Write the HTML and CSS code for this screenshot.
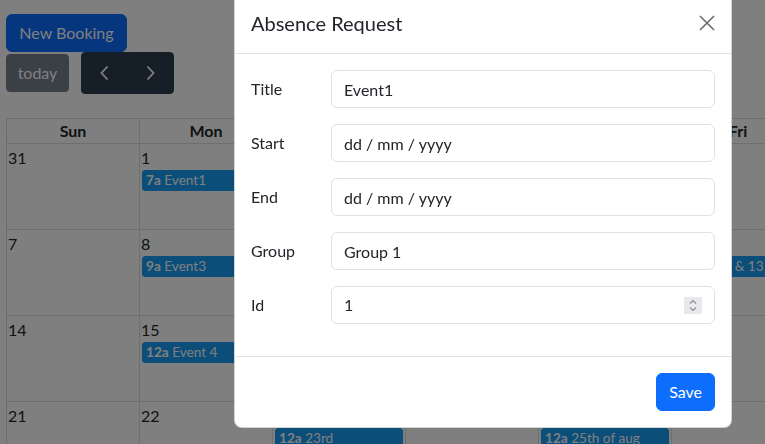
FILE: index.html
```html
<!DOCTYPE html>
<html lang="en">
<head>
<meta charset="utf-8">
<title>Bookings</title>
<link rel="stylesheet" href="styles.css">
</head>
<body>
<div class="page">
  <button class="btn btn-primary new-booking">New Booking</button>
  <div class="calendar">
    <div class="toolbar">
      <button class="fc-btn fc-today" disabled>today</button>
      <div class="fc-group">
        <button class="fc-btn fc-nav fc-prev" aria-label="prev">
          <svg width="10" height="16" viewBox="0 0 10 16"><path d="M8.5 1.5 2.5 8l6 6.5" fill="none" stroke="#fff" stroke-width="1.8"/></svg>
        </button>
        <button class="fc-btn fc-nav fc-next" aria-label="next">
          <svg width="10" height="16" viewBox="0 0 10 16"><path d="M1.5 1.5 7.5 8l-6 6.5" fill="none" stroke="#fff" stroke-width="1.8"/></svg>
        </button>
      </div>
    </div>
    <div class="month">
      <div class="head">Sun</div><div class="head">Mon</div><div class="head">Tue</div><div class="head">Wed</div><div class="head">Thu</div><div class="head">Fri</div><div class="head">Sat</div>

      <div class="day"><div class="num">31</div></div>
      <div class="day"><div class="num">1</div><div class="event"><b>7a</b> Event1</div></div>
      <div class="day"><div class="num">2</div></div>
      <div class="day"><div class="num">3</div></div>
      <div class="day"><div class="num">4</div></div>
      <div class="day"><div class="num">5</div></div>
      <div class="day"><div class="num">6</div></div>

      <div class="day"><div class="num">7</div></div>
      <div class="day"><div class="num">8</div><div class="event"><b>9a</b> Event3</div></div>
      <div class="day"><div class="num">9</div></div>
      <div class="day"><div class="num">10</div></div>
      <div class="day"><div class="num">11</div></div>
      <div class="day"><div class="num">12</div><div class="event">Event 12 &amp; 13</div></div>
      <div class="day"><div class="num">13</div></div>

      <div class="day"><div class="num">14</div></div>
      <div class="day"><div class="num">15</div><div class="event"><b>12a</b> Event 4</div></div>
      <div class="day"><div class="num">16</div></div>
      <div class="day"><div class="num">17</div></div>
      <div class="day"><div class="num">18</div></div>
      <div class="day"><div class="num">19</div></div>
      <div class="day"><div class="num">20</div></div>

      <div class="day"><div class="num">21</div></div>
      <div class="day"><div class="num">22</div></div>
      <div class="day"><div class="num">23</div><div class="event"><b>12a</b> 23rd</div></div>
      <div class="day"><div class="num">24</div></div>
      <div class="day"><div class="num">25</div><div class="event"><b>12a</b> 25th of aug</div></div>
      <div class="day"><div class="num">26</div></div>
      <div class="day"><div class="num">27</div></div>
    </div>
  </div>
</div>

<div class="backdrop"></div>

<div class="modal" role="dialog">
  <div class="modal-header">
    <h5 class="modal-title">Absence Request</h5>
    <button class="btn-close" aria-label="Close">
      <svg width="16" height="16" viewBox="0 0 16 16"><path d="M1 1 15 15M15 1 1 15" stroke="#6b6b6b" stroke-width="1.6" fill="none"/></svg>
    </button>
  </div>
  <div class="modal-body">
    <div class="form-row"><label>Title</label><input class="form-control" type="text" value="Event1"></div>
    <div class="form-row"><label>Start</label><input class="form-control" type="text" value="dd / mm / yyyy"></div>
    <div class="form-row"><label>End</label><input class="form-control" type="text" value="dd / mm / yyyy"></div>
    <div class="form-row"><label>Group</label><input class="form-control" type="text" value="Group 1"></div>
    <div class="form-row"><label>Id</label>
      <div class="form-control number">
        <input class="number-input" type="text" value="1">
        <span class="spinner">
          <svg width="18" height="17" viewBox="0 0 18 17"><path d="M6 6.5 9 3.5l3 3M6 10.5l3 3 3-3" fill="none" stroke="#8d8d93" stroke-width="1.2"/></svg>
        </span>
      </div>
    </div>
  </div>
  <div class="modal-footer">
    <button class="btn btn-primary">Save</button>
  </div>
</div>
</body>
</html>
```

FILE: styles.css
```css
* { box-sizing: border-box; }

html, body {
  margin: 0;
  overflow: hidden;
}

body {
  width: 765px;
  height: 444px;
  font-family: Lato, "Liberation Sans", sans-serif;
  font-size: 16px;
  line-height: 1.5;
  color: #212529;
  background: #fff;
}

.page {
  width: 950px;
  padding: 14px 0 0 6px;
}

.btn {
  display: block;
  height: 38px;
  padding: 0 12px;
  border-radius: 6px;
  font: inherit;
  cursor: pointer;
}

.btn-primary {
  background: #0d6efd;
  border: 1px solid #0d6efd;
  color: #fff;
}

.new-booking { width: 121px; }

.toolbar {
  display: flex;
  align-items: center;
  gap: 12px;
  height: 42px;
  margin-bottom: 24px;
}

.fc-btn {
  background: #2c3e50;
  border: 1px solid #2c3e50;
  color: #fff;
  font: inherit;
  padding: 0;
}

.fc-today {
  width: 63px;
  height: 38px;
  border-radius: 4px;
  opacity: .65;
}

.fc-group { display: flex; }

.fc-nav {
  width: 46.5px;
  height: 42px;
  display: flex;
  align-items: center;
  justify-content: center;
}

.fc-prev { border-radius: 4px 0 0 4px; }
.fc-next { border-radius: 0 4px 4px 0; }

.month {
  display: grid;
  grid-template-columns: repeat(7, 133px);
  width: 932px;
  border-top: 1px solid #ddd;
  border-left: 1px solid #ddd;
}

.head {
  height: 25px;
  line-height: 24px;
  text-align: center;
  font-weight: 700;
  border-right: 1px solid #ddd;
  border-bottom: 1px solid #ddd;
}

.day {
  height: 86px;
  border-right: 1px solid #ddd;
  border-bottom: 1px solid #ddd;
}

.num {
  padding: 2px 1px 0;
  line-height: 24px;
}

.event {
  margin: 0 2px;
  height: 21px;
  padding: 0 3px;
  border: 1px solid #159df2;
  border-radius: 3px;
  background: #159df2;
  color: #fff;
  font-size: 13.6px;
  line-height: 19px;
  white-space: nowrap;
  overflow: hidden;
}

.backdrop {
  position: fixed;
  inset: 0;
  background: rgba(0, 0, 0, .5);
}

.modal {
  position: fixed;
  top: -10px;
  left: 234px;
  width: 498px;
  background: #fff;
  border: 1px solid rgba(0, 0, 0, .175);
  border-radius: 8px;
}

.modal-header {
  display: flex;
  align-items: center;
  justify-content: space-between;
  padding: 17px 16px 15px;
  border-bottom: 1px solid #dee2e6;
}

.modal-title {
  margin: 0;
  font-size: 20px;
  line-height: 30px;
  font-weight: 400;
}

.btn-close {
  width: 16px;
  height: 16px;
  padding: 0;
  border: 0;
  background: transparent;
  display: flex;
}

.modal-body { padding: 16px 16px 0; }

.form-row {
  display: grid;
  grid-template-columns: 80px 1fr;
  align-items: center;
  margin-bottom: 16px;
}

.form-row label {
  padding: 7px 0;
  line-height: 24px;
}

.form-control {
  width: 100%;
  height: 38px;
  padding: 6px 12px;
  border: 1px solid #dee2e6;
  border-radius: 6px;
  font: inherit;
  color: #212529;
  background: #fff;
}

.number {
  display: flex;
  align-items: center;
}

.number-input {
  flex: 1;
  min-width: 0;
  border: 0;
  padding: 0;
  font: inherit;
  color: #212529;
  background: transparent;
}

.spinner {
  display: flex;
  width: 18px;
  height: 17px;
  background: #e9e9ed;
}

.modal-body::after { content: ""; display: block; height: 16px; }

.modal-footer {
  display: flex;
  justify-content: flex-end;
  padding: 12px;
  border-top: 1px solid #dee2e6;
}

.modal-footer .btn { margin: 4px; }
```
